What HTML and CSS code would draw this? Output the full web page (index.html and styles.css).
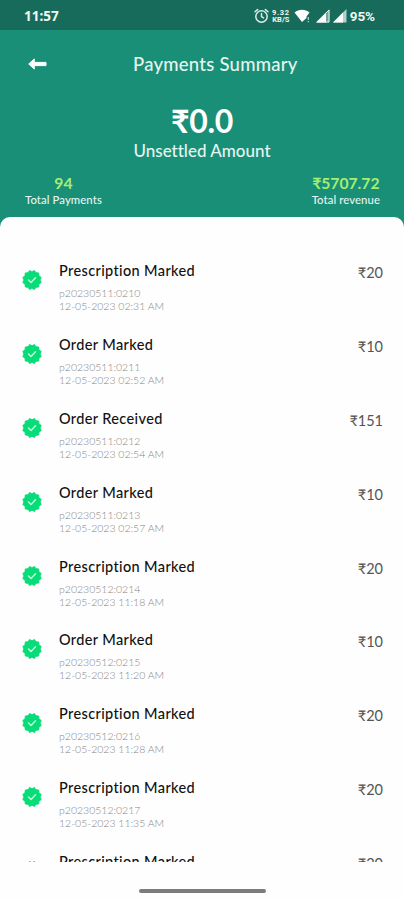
FILE: index.html
```html
<!DOCTYPE html>
<html lang="en">
<head>
<meta charset="utf-8">
<title>Payments Summary</title>
<link rel="stylesheet" href="styles.css">
</head>
<body>
<svg width="0" height="0" class="defs" aria-hidden="true">
  <symbol id="seal" viewBox="0 0 20 20">
    <path fill="#08dc78" stroke="#08dc78" stroke-width="1" stroke-linejoin="round" d="M10 1.900 12.400.5l1.500 2.300 2.800.2.200 2.800 2.300 1.700L18 10l1.200 2.500-2.300 1.700-.2 2.800-2.800.2-1.500 2.300L10 18.100l-2.400 1.400-1.500-2.300-2.800-.2-.2-2.800-2.300-1.700L2 10 .8 7.500l2.300-1.700.2-2.800 2.800-.2L7.600.5z"/>
    <path fill="none" stroke="#b9ffd9" stroke-width="1.500" stroke-linecap="round" stroke-linejoin="round" d="M6.500 10l2.500 2.500 4.500-4.700"/>
  </symbol>
</svg>
<div class="screen">
  <div class="status">
    <span class="time">11:57</span>
    <div class="tray">
      <svg class="alarm" width="15" height="16" viewBox="0 0 15 16" fill="none" stroke="#dcece8" stroke-width="1.5" stroke-linecap="round"><circle cx="7.500" cy="8.500" r="5.700"/><path d="M1 3.800 3.600 1.600M14 3.800 11.400 1.600M7.500 5.500v3.200l2 1.200"/></svg>
      <div class="speed"><span class="rate">9.32</span><span>KB/S</span></div>
      <svg class="wifi" width="17" height="14" viewBox="0 0 17 14"><path fill="#fff" d="M.5 3.500C5-.2 11-.2 15.500 3.500L12.500 7.400V9L8 13z"/><path stroke="#b8d4cd" stroke-width="1.200" d="M14.300 8v3M14.300 12v1.200"/></svg>
      <svg class="sig" width="15" height="14" viewBox="0 0 15 14"><path fill="#6ea698" d="M14.500 0v13.500H1z"/><path fill="#fff" d="M11 3.500v10H1z"/><path fill="none" stroke="#e6f2ef" d="M14 1v12H2z"/></svg>
      <svg class="sig" width="15" height="14" viewBox="0 0 15 14"><path fill="#b3d0c9" d="M14.500 0v13.500H1z"/><path fill="#fff" d="M11 3.500v10H1z"/></svg>
      <span class="battery">95%</span>
    </div>
  </div>
  <header class="hero">
    <div class="bar">
      <svg class="back" width="19" height="12" viewBox="0 0 19 12"><path fill="#fff" stroke="#fff" stroke-linejoin="round" d="M.7 6 6.300.9V4.400H18V7.600H6.300V11.100z"/></svg>
      <h1>Payments Summary</h1>
    </div>
    <div class="amount">₹0.0</div>
    <div class="caption">Unsettled Amount</div>
    <div class="stats">
      <div class="stat"><b>94</b><span>Total Payments</span></div>
      <div class="stat revenue"><b>₹5707.72</b><span>Total revenue</span></div>
    </div>
  </header>
  <main class="panel">
    <ul class="list">
      <li><svg class="seal"><use href="#seal"/></svg><div class="info"><h2>Prescription Marked</h2><p>p20230511:0210</p><p>12-05-2023 02:31 AM</p></div><span class="price">₹20</span></li>
      <li><svg class="seal"><use href="#seal"/></svg><div class="info"><h2>Order Marked</h2><p>p20230511:0211</p><p>12-05-2023 02:52 AM</p></div><span class="price">₹10</span></li>
      <li><svg class="seal"><use href="#seal"/></svg><div class="info"><h2>Order Received</h2><p>p20230511:0212</p><p>12-05-2023 02:54 AM</p></div><span class="price">₹151</span></li>
      <li><svg class="seal"><use href="#seal"/></svg><div class="info"><h2>Order Marked</h2><p>p20230511:0213</p><p>12-05-2023 02:57 AM</p></div><span class="price">₹10</span></li>
      <li><svg class="seal"><use href="#seal"/></svg><div class="info"><h2>Prescription Marked</h2><p>p20230512:0214</p><p>12-05-2023 11:18 AM</p></div><span class="price">₹20</span></li>
      <li><svg class="seal"><use href="#seal"/></svg><div class="info"><h2>Order Marked</h2><p>p20230512:0215</p><p>12-05-2023 11:20 AM</p></div><span class="price">₹10</span></li>
      <li><svg class="seal"><use href="#seal"/></svg><div class="info"><h2>Prescription Marked</h2><p>p20230512:0216</p><p>12-05-2023 11:28 AM</p></div><span class="price">₹20</span></li>
      <li><svg class="seal"><use href="#seal"/></svg><div class="info"><h2>Prescription Marked</h2><p>p20230512:0217</p><p>12-05-2023 11:35 AM</p></div><span class="price">₹20</span></li>
      <li><svg class="seal"><use href="#seal"/></svg><div class="info"><h2>Prescription Marked</h2></div><span class="price">₹20</span></li>
    </ul>
  </main>
  <footer class="nav"><div class="handle"></div></footer>
</div>
</body>
</html>
```

FILE: styles.css
```css
* { box-sizing: border-box; margin: 0; padding: 0; }
body { font-family: Lato, "Noto Sans", sans-serif; font-variant-ligatures: none; background: #1a8f78; overflow: hidden; }
.defs { display: block; }
.screen { width: 404px; height: 900px; display: flex; flex-direction: column; overflow: hidden; }
.status { height: 30px; flex: none; background: #176b5a; display: flex; align-items: center; justify-content: space-between; padding: 2px 29px 0 24px; color: #eff8f5; }
.time { font: 700 13.500px/16px "Noto Sans", sans-serif; }
.tray { display: flex; align-items: center; }
.speed { display: flex; flex-direction: column; width: 18px; margin: 0 4px 0 3px; font: 700 7.500px/7px Roboto, sans-serif; text-align: center; }
.rate { letter-spacing: .6px; }
.sig { margin-left: 2px; }
.wifi { margin-right: 2px; }
.battery { font: 700 13.500px/16px Roboto, sans-serif; margin-left: 3px; letter-spacing: -.1px; }
.hero { height: 187px; flex: none; color: #e4f5f0; display: flex; flex-direction: column; }
.bar { height: 68px; display: grid; grid-template-columns: 105px 1fr; align-items: center; padding-left: 28px; }
h1 { font-size: 18.500px; font-weight: 500; line-height: 24px; letter-spacing: .25px; white-space: nowrap; }
.amount { font-size: 32px; font-weight: 700; line-height: 40px; letter-spacing: -.3px; text-align: center; color: #fff; margin-top: 3px; }
.caption { font-size: 17px; font-weight: 500; line-height: 20px; text-align: center; }
.stats { display: flex; justify-content: space-between; padding: 0 24px 0 25px; margin-top: 13px; }
.stat { display: flex; flex-direction: column; align-items: center; white-space: nowrap; }
.stat b { font-size: 15.700px; line-height: 18px; color: #a5ee72; font-weight: 700; }
.stat span { font-size: 11.300px; line-height: 15px; font-weight: 500; letter-spacing: .1px; }
.panel { height: 645px; flex: none; background: #fefefe; border-radius: 10px 10px 0 0; padding-top: 45.200px; overflow: hidden; }
.list { list-style: none; }
li { height: 73.830px; display: grid; grid-template-columns: 37px 1fr auto; padding: 0 21px 0 22px; }
.seal { width: 20px; height: 20px; margin-top: 8px; }
h2 { font-size: 14.500px; font-weight: 500; line-height: 18px; letter-spacing: .37px; color: #111; white-space: nowrap; }
.info p { font-size: 10.500px; line-height: 13px; color: #858585; font-weight: 300; white-space: nowrap; }
.info h2 + p { margin-top: 7px; }
.price { font-size: 14.500px; line-height: 20px; color: #555; padding-top: 1px; }
.nav { flex: 1; background: #fefefe; display: flex; justify-content: center; padding-top: 27px; }
.handle { width: 127px; height: 4px; background: #7b7b7b; border-radius: 2px; }
```
